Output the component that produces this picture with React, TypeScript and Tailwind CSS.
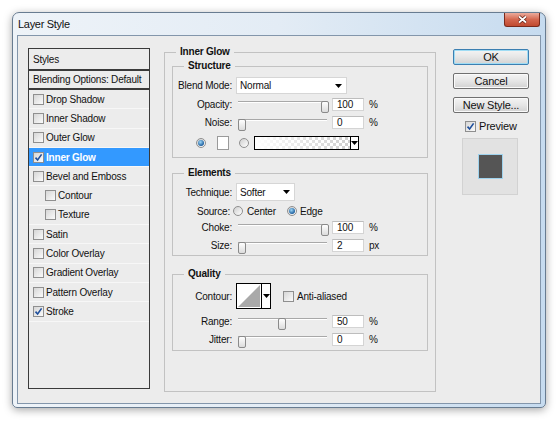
import type { ReactNode } from 'react'

function Check({ checked = false }: { checked?: boolean }) {
  return (
    <span className="flex h-[11px] w-[11px] shrink-0 items-center justify-center border border-[#8f8f8f] bg-linear-to-br from-[#d6d6d6] to-[#fbfbfb]">
      {checked && (
        <svg width="9" height="9" viewBox="0 0 9 9">
          <path d="M1.5 4.6 L3.6 7 L7.6 1.4" fill="none" stroke="#1f4f9c" strokeWidth="1.6" />
        </svg>
      )}
    </span>
  )
}

function Radio({ on = false }: { on?: boolean }) {
  return (
    <span className="flex h-[10px] w-[10px] shrink-0 items-center justify-center rounded-full border border-[#8f8f8f] bg-linear-to-br from-[#cfcfcf] to-white">
      {on && <span className="h-[6px] w-[6px] rounded-full bg-[radial-gradient(circle_at_40%_35%,#9fd8f7,#1d5f9f_70%)]" />}
    </span>
  )
}

function Arrow() {
  return (
    <svg width="7" height="4" viewBox="0 0 7 4">
      <polygon points="0,0 7,0 3.5,4" fill="#000" />
    </svg>
  )
}

function Slider({ thumb }: { thumb: string }) {
  return (
    <div className="relative h-[13px] w-[89px]">
      <div className="mt-[6px] h-[2px] border-t border-b border-t-[#a8a8a8] border-b-white" />
      <span className={`absolute top-0 h-[12px] w-[8px] rounded-[2px] border border-[#8a8a8a] bg-linear-to-b from-white to-[#dcdcdc] ${thumb}`} />
    </div>
  )
}

function Num({ v }: { v: string }) {
  return (
    <span className="flex h-[13px] w-[32px] items-center border border-[#d4d4d4] border-t-[#bdbdbd] bg-white pl-[4px]">
      {v}
    </span>
  )
}

function SliderRow({ label, thumb, value, unit, className = '' }: { label: string; thumb: string; value: string; unit: string; className?: string }) {
  return (
    <div className={`flex h-[15px] items-center ${className}`}>
      <span className="w-[59px] shrink-0 text-right">{label}</span>
      <span className="ml-[6px]"><Slider thumb={thumb} /></span>
      <span className="ml-[5px]"><Num v={value} /></span>
      <span className="ml-[5px]">{unit}</span>
    </div>
  )
}

function Group({ title, className = '', legend = 'ml-[11px]', children }: { title: string; className?: string; legend?: string; children: ReactNode }) {
  return (
    <fieldset className={`border border-[#c2c2c2] ${className}`}>
      <legend className={`px-[4px] text-[10px] font-bold leading-[12px] ${legend}`}>{title}</legend>
      {children}
    </fieldset>
  )
}

function Btn({ label, focus = false }: { label: string; focus?: boolean }) {
  return (
    <button
      className={`flex h-[16px] w-[76px] items-center justify-center rounded-[2px] border text-[11px] leading-none bg-linear-to-b from-[#f4f4f4] via-[#e6e6e6] to-[#d2d2d2] ${
        focus ? 'border-[#3c7fb1] shadow-[inset_0_0_0_1px_#9fdcf4]' : 'border-[#707070] shadow-[inset_0_0_0_1px_#fafafa]'
      }`}
    >
      {label}
    </button>
  )
}

const styles: { name: string; checked?: boolean; indent?: boolean; active?: boolean }[] = [
  { name: 'Drop Shadow' },
  { name: 'Inner Shadow' },
  { name: 'Outer Glow' },
  { name: 'Inner Glow', checked: true, active: true },
  { name: 'Bevel and Emboss' },
  { name: 'Contour', indent: true },
  { name: 'Texture', indent: true },
  { name: 'Satin' },
  { name: 'Color Overlay' },
  { name: 'Gradient Overlay' },
  { name: 'Pattern Overlay' },
  { name: 'Stroke', checked: true },
]

export default function App() {
  return (
    <div className="h-[422px] w-[560px] overflow-hidden bg-white pl-[12px] pt-[12px] font-['Liberation_Sans',Arial,sans-serif] text-[10px] tracking-[-0.2px] text-[#111]">
      {/* window */}
      <div className="flex h-[396px] w-[534px] flex-col rounded-t-[7px] rounded-b-[5px] border border-[#687c91] bg-linear-to-r from-[#eef3f8] via-[#e3ecf5] to-[#c6dbef] px-[4px] pb-[3px] shadow-[0_2px_9px_rgba(0,0,0,0.35)]">
        <div className="flex h-[22px] shrink-0 items-start justify-between">
          <span className="self-center pl-[1px] text-[11px] tracking-[-0.3px] text-[#111]">Layer Style</span>
          <span className="mr-[1px] flex h-[14px] w-[36px] items-center justify-center rounded-b-[3px] border border-t-0 border-[#7a2a1c] bg-linear-to-b from-[#ebab9c] via-[#d4674f] to-[#c04a30]">
            <svg width="11" height="9" viewBox="0 0 11 9">
              <path d="M2 1.5 L9 7.5 M9 1.5 L2 7.5" stroke="#5c1a10" strokeWidth="3.2" />
              <path d="M2 1.5 L9 7.5 M9 1.5 L2 7.5" stroke="#fff" strokeWidth="1.8" />
            </svg>
          </span>
        </div>

        {/* content */}
        <div className="flex flex-1 items-start border border-[#8396ab] bg-[#ececec] pl-[10px] pr-[10px] pt-[10px]">
          {/* styles list */}
          <div className="mt-[2px] h-[341px] w-[122px] shrink-0 border border-[#3a3a3a]">
            <div className="flex h-[22px] items-center border-b-2 border-[#3a3a3a] pl-[4px]">Styles</div>
            <div className="flex h-[19px] items-center border-b-2 border-[#3a3a3a] pl-[4px]">Blending Options: Default</div>
            {styles.map((s) => (
              <div
                key={s.name}
                className={`flex h-[19.3px] items-center gap-[2px] border-b border-[#f7f7f7] ${s.indent ? 'pl-[16px]' : 'pl-[4px]'} ${
                  s.active ? 'bg-[#3399ff] font-bold text-white' : ''
                }`}
              >
                <Check checked={s.checked} />
                <span>{s.name}</span>
              </div>
            ))}
          </div>

          {/* settings */}
          <Group title="Inner Glow" legend="ml-[4px]" className="ml-[14px] w-[272px] shrink-0 px-[7px] pb-[40px]">
            <Group title="Structure" className="mt-[2px] pb-[7px]">
              <div className="mt-[5px] flex h-[17px] items-center">
                <span className="w-[59px] shrink-0 text-right">Blend Mode:</span>
                <span className="ml-[4px] flex h-[17px] w-[111px] items-center justify-between border border-[#d6d6d6] bg-white pl-[3px] pr-[4px]">
                  Normal
                  <Arrow />
                </span>
              </div>
              <SliderRow label="Opacity:" thumb="left-[83px]" value="100" unit="%" className="mt-[3px]" />
              <SliderRow label="Noise:" thumb="left-0" value="0" unit="%" className="mt-[3px]" />
              <div className="mt-[5px] flex h-[15px] items-center">
                <span className="ml-[23px]"><Radio on /></span>
                <span className="ml-[11px] h-[14px] w-[12px] border border-[#9a9a9a] bg-white" />
                <span className="ml-[10px]"><Radio /></span>
                <span className="ml-[5px] flex h-[14px] w-[105px] border border-black bg-white">
                  <svg width="95" height="12" viewBox="0 0 95 12">
                    <defs>
                      <pattern id="chk" width="6" height="6" patternUnits="userSpaceOnUse">
                        <rect width="6" height="6" fill="#fff" />
                        <rect width="3" height="3" fill="#cfcfcf" />
                        <rect x="3" y="3" width="3" height="3" fill="#cfcfcf" />
                      </pattern>
                      <linearGradient id="fade" x1="0" x2="1" y1="0" y2="0">
                        <stop offset="0" stopColor="#fff" stopOpacity="1" />
                        <stop offset="1" stopColor="#fff" stopOpacity="0" />
                      </linearGradient>
                    </defs>
                    <rect width="95" height="12" fill="url(#chk)" />
                    <rect width="95" height="12" fill="url(#fade)" />
                  </svg>
                  <span className="flex flex-1 items-center justify-center border-l border-black">
                    <Arrow />
                  </span>
                </span>
              </div>
            </Group>

            <Group title="Elements" className="mt-[9px] pb-[2px]">
              <div className="mt-[4px] flex h-[18px] items-center">
                <span className="w-[59px] shrink-0 text-right">Technique:</span>
                <span className="ml-[4px] flex h-[18px] w-[59px] items-center justify-between border border-[#d6d6d6] bg-white pl-[3px] pr-[4px]">
                  Softer
                  <Arrow />
                </span>
              </div>
              <div className="mt-[3px] flex h-[14px] items-center">
                <span className="w-[57px] shrink-0 text-right">Source:</span>
                <span className="ml-[3px] flex w-[54px] items-center gap-[4px]">
                  <Radio />
                  Center
                </span>
                <span className="flex items-center gap-[3px]">
                  <Radio on />
                  Edge
                </span>
              </div>
              <SliderRow label="Choke:" thumb="left-[83px]" value="100" unit="%" className="mt-[2px]" />
              <SliderRow label="Size:" thumb="left-0" value="2" unit="px" className="mt-[3px]" />
            </Group>

            <Group title="Quality" className="mt-[12px] pb-[3px]">
              <div className="mt-[3px] flex h-[26px] items-center">
                <span className="w-[59px] shrink-0 text-right">Contour:</span>
                <span className="ml-[4px] flex h-[26px] w-[35px] border border-black bg-white">
                  <svg width="24" height="24" viewBox="0 0 24 24">
                    <polygon points="1,23 23,1 23,23" fill="#a9a9a9" />
                  </svg>
                  <span className="flex flex-1 items-center justify-center border-l border-black">
                    <Arrow />
                  </span>
                </span>
                <span className="ml-[12px]"><Check /></span>
                <span className="ml-[3px]">Anti-aliased</span>
              </div>
              <SliderRow label="Range:" thumb="left-[40px]" value="50" unit="%" className="mt-[5px]" />
              <SliderRow label="Jitter:" thumb="left-0" value="0" unit="%" className="mt-[3px]" />
            </Group>
          </Group>

          {/* buttons */}
          <div className="ml-[17px] mt-[3px] flex w-[76px] shrink-0 flex-col">
            <Btn label="OK" focus />
            <div className="mt-[8px]"><Btn label="Cancel" /></div>
            <div className="mt-[8px]"><Btn label="New Style..." /></div>
            <div className="mt-[6px] flex h-[14px] items-center gap-[3px] pl-[12px] text-[11px]">
              <Check checked />
              Preview
            </div>
            <div className="ml-[9px] mt-[5px] flex h-[57px] w-[56px] items-center justify-center border border-[#d2d2d2] bg-[#e2e2e2]">
              <span className="h-[25px] w-[25px] border border-[#9fd3ee] bg-[#555555]" />
            </div>
          </div>
        </div>
      </div>
    </div>
  )
}
